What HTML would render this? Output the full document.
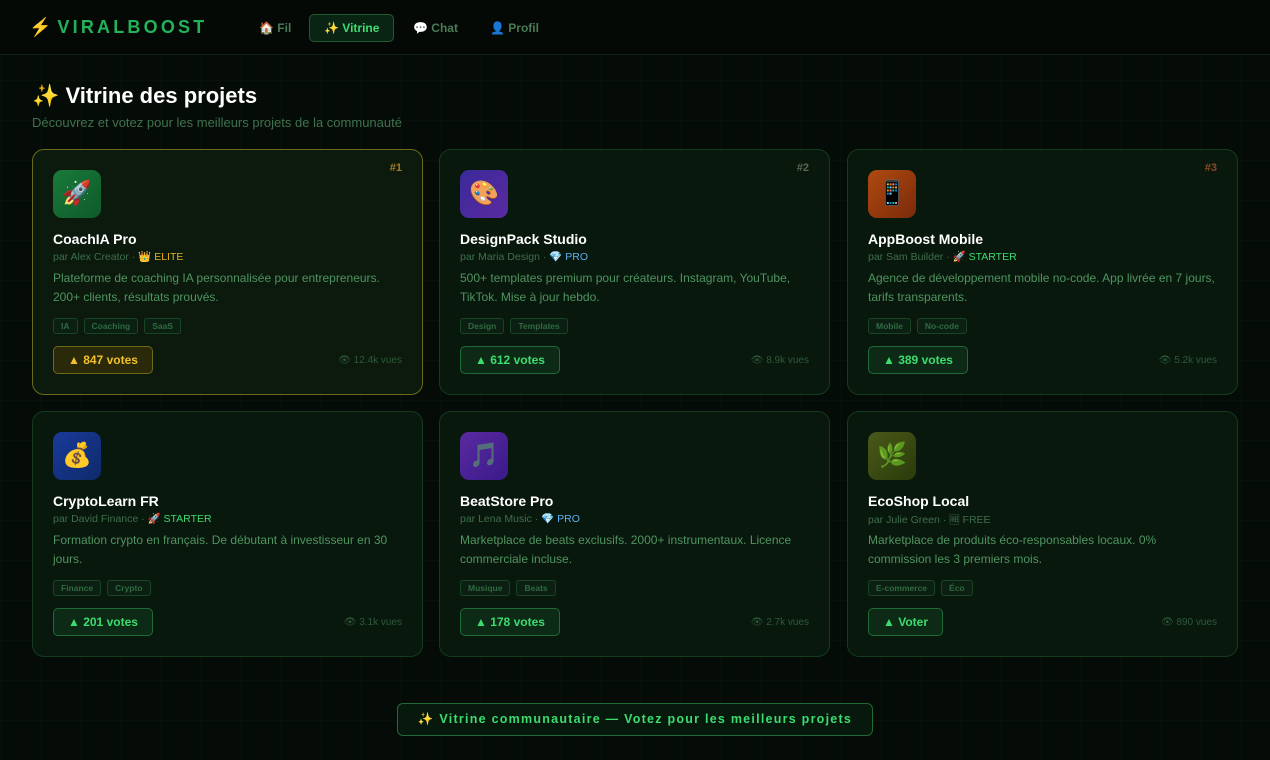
<!DOCTYPE html>
<html><head><meta charset="utf-8"><style>
*{box-sizing:border-box;margin:0;padding:0}
body{width:1270px;height:760px;overflow:hidden;background:#050b06;font-family:"Liberation Sans","Noto Sans CJK JP",sans-serif;color:#cfe;position:relative;
background-image:linear-gradient(rgba(30,80,40,.09) 1px,transparent 1px),linear-gradient(90deg,rgba(30,80,40,.09) 1px,transparent 1px);background-size:40px 40px}
.nav{height:55px;background:#040905;border-bottom:1px solid #0f2414;position:relative}
.logo{position:absolute;left:29px;top:17px;font-size:18px;font-weight:bold;letter-spacing:3.2px;color:#22b35a}
.logo span{color:#f5b50a;margin-right:6px;letter-spacing:0}
.nl{position:absolute;top:14px;height:28px;line-height:28px;font-size:12px;font-weight:bold;color:#4a7a56;padding:0 14px}
.nl.act{background:#0a2414;border:1px solid #1f5a31;border-radius:5px;color:#3ddc6f;line-height:26px}
h1{position:absolute;left:32px;top:83px;font-size:22px;color:#fff}
.sub{position:absolute;left:32px;top:115px;font-size:13px;color:#3f7250}
.card{position:absolute;width:391px;height:246px;background:rgba(10,26,14,.92);border:1px solid #143a1f;border-radius:12px}
.card.gold{border-color:#6a6a1a;background:#0b1a0d}
.rank{position:absolute;right:20px;top:12px;font-size:11px;font-weight:bold;color:#5a6650}
.gold .rank{color:#a37a20}
.ic{position:absolute;left:20px;top:20px;width:48px;height:48px;border-radius:9px;font-size:24px;text-align:center;line-height:48px}
.t{position:absolute;left:20px;top:81px;font-size:14px;font-weight:bold;color:#fff}
.by{position:absolute;left:20px;top:100px;font-size:10.5px;color:#3f6e4d}
.d{position:absolute;left:20px;top:119px;width:350px;font-size:12px;line-height:19px;color:#4f9460}
.tags{position:absolute;left:20px;top:168px;display:flex;gap:6px}
.tag{height:16px;line-height:14px;padding:0 7px;font-size:8.5px;font-weight:bold;color:#2f6a40;border:1px solid #1a4426;border-radius:3px;background:#0b2012}
.v{position:absolute;left:20px;top:196px;height:28px;line-height:26px;padding:0 14px;font-size:12px;font-weight:bold;color:#3ddc6f;background:#0c2a15;border:1px solid #1f6a36;border-radius:5px}
.gold .v{color:#f3c02a;background:#2a2a0a;border-color:#6e6a1a}
.vw{position:absolute;right:20px;top:205px;font-size:10px;color:#2d5a3a}
.foot{position:absolute;left:397px;top:703px;width:476px;height:33px;border:1px solid #1f6a36;border-radius:6px;background:#07190c;text-align:center;line-height:31px;font-size:12.5px;font-weight:bold;letter-spacing:1.25px;color:#3ddc6f}
</style></head><body>
<div class="nav">
<div class="logo"><span>⚡</span>VIRALBOOST</div>
<div class="nl" style="left:245px">🏠 Fil</div>
<div class="nl act" style="left:309px">✨ Vitrine</div>
<div class="nl" style="left:399px">💬 Chat</div>
<div class="nl" style="left:476px">👤 Profil</div>
</div>
<h1>✨ Vitrine des projets</h1>
<div class="sub">Découvrez et votez pour les meilleurs projets de la communauté</div>

<div class="card gold" style="left:32px;top:149px"><div class="rank">#1</div><div class="ic" style="background:linear-gradient(135deg,#1a7a3a,#0e5a2a)">🚀</div><div class="t">CoachIA Pro</div><div class="by">par Alex Creator · <span style="color:#e8b020">👑 ELITE</span></div><div class="d">Plateforme de coaching IA personnalisée pour entrepreneurs. 200+ clients, résultats prouvés.</div><div class="tags"><span class="tag">IA</span><span class="tag">Coaching</span><span class="tag">SaaS</span></div><div class="v">▲ 847 votes</div><div class="vw">👁 12.4k vues</div></div>

<div class="card" style="left:439px;top:149px"><div class="rank">#2</div><div class="ic" style="background:linear-gradient(135deg,#3a2a9a,#5a2aa0)">🎨</div><div class="t">DesignPack Studio</div><div class="by">par Maria Design · <span style="color:#5ab0f0">💎 PRO</span></div><div class="d">500+ templates premium pour créateurs. Instagram, YouTube, TikTok. Mise à jour hebdo.</div><div class="tags"><span class="tag">Design</span><span class="tag">Templates</span></div><div class="v">▲ 612 votes</div><div class="vw">👁 8.9k vues</div></div>

<div class="card" style="left:847px;top:149px"><div class="rank" style="color:#8a4a20">#3</div><div class="ic" style="background:linear-gradient(135deg,#b04a10,#7a2a0a)">📱</div><div class="t">AppBoost Mobile</div><div class="by">par Sam Builder · <span style="color:#3ddc6f">🚀 STARTER</span></div><div class="d">Agence de développement mobile no-code. App livrée en 7 jours, tarifs transparents.</div><div class="tags"><span class="tag">Mobile</span><span class="tag">No-code</span></div><div class="v">▲ 389 votes</div><div class="vw">👁 5.2k vues</div></div>

<div class="card" style="left:32px;top:411px"><div class="ic" style="background:linear-gradient(135deg,#1a3a9a,#0e2a6a)">💰</div><div class="t">CryptoLearn FR</div><div class="by">par David Finance · <span style="color:#3ddc6f">🚀 STARTER</span></div><div class="d">Formation crypto en français. De débutant à investisseur en 30 jours.</div><div class="tags"><span class="tag">Finance</span><span class="tag">Crypto</span></div><div class="v">▲ 201 votes</div><div class="vw">👁 3.1k vues</div></div>

<div class="card" style="left:439px;top:411px"><div class="ic" style="background:linear-gradient(135deg,#5a2aa0,#3a1a8a)">🎵</div><div class="t">BeatStore Pro</div><div class="by">par Lena Music · <span style="color:#5ab0f0">💎 PRO</span></div><div class="d">Marketplace de beats exclusifs. 2000+ instrumentaux. Licence commerciale incluse.</div><div class="tags"><span class="tag">Musique</span><span class="tag">Beats</span></div><div class="v">▲ 178 votes</div><div class="vw">👁 2.7k vues</div></div>

<div class="card" style="left:847px;top:411px"><div class="ic" style="background:linear-gradient(135deg,#4a5a1a,#2a3a0a)">🌿</div><div class="t">EcoShop Local</div><div class="by">par Julie Green · 🆓 FREE</div><div class="d">Marketplace de produits éco-responsables locaux. 0% commission les 3 premiers mois.</div><div class="tags"><span class="tag">E-commerce</span><span class="tag">Éco</span></div><div class="v">▲ Voter</div><div class="vw">👁 890 vues</div></div>

<div class="foot">✨ Vitrine communautaire — Votez pour les meilleurs projets</div>
</body></html>
